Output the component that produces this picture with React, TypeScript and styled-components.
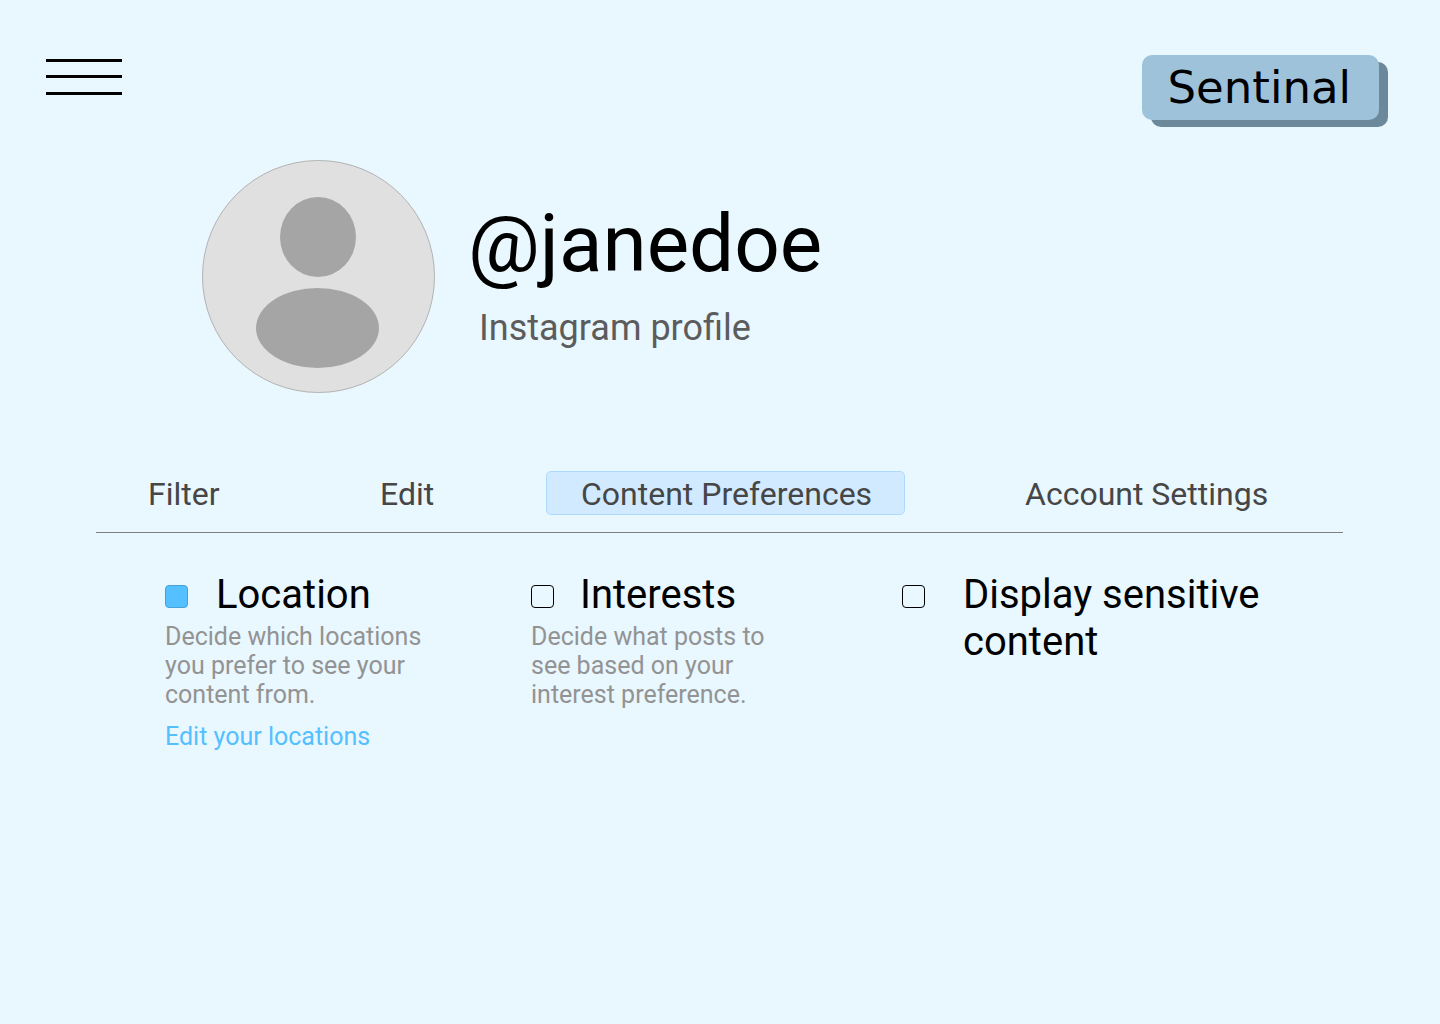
import React, { useState } from "react";
import styled, { createGlobalStyle } from "styled-components";

const GlobalStyle = createGlobalStyle`
  *, *::before, *::after { box-sizing: border-box; }
  body {
    margin: 0;
    background: #e9f7ff;
    color: #000;
    font-family: Roboto, "Liberation Sans", sans-serif;
  }
`;

const Page = styled.div`
  min-height: 100vh;
`;

const Header = styled.header`
  display: flex;
  justify-content: space-between;
  align-items: flex-start;
  padding: 55px 61px 0 46px;
`;

const MenuButton = styled.button`
  display: block;
  padding: 4px 0;
  border: 0;
  background: none;
  cursor: pointer;

  svg { display: block; }
`;

const Brand = styled.a`
  padding: 0 28px 0 25px;
  border-radius: 10px;
  background: #9dc2d9;
  box-shadow: 9px 7px 0 #6b899a;
  color: #000;
  font: 45px/65px "DejaVu Sans", Verdana, sans-serif;
  text-decoration: none;
`;

const Profile = styled.section`
  display: flex;
  gap: 33px;
  padding: 40px 96px 0 202px;
`;

const Avatar = styled.svg`
  display: block;
  flex: none;
  width: 233px;
  height: 233px;
`;

const Identity = styled.div`
  display: flex;
  flex-direction: column;
  gap: 16px;
  padding-top: 37px;
`;

const Handle = styled.h1`
  margin: 0;
  font-size: 80px;
  font-weight: 400;
  line-height: 94px;
`;

const Source = styled.p`
  margin: 0;
  padding-left: 11px;
  color: #5c5c5c;
  font-size: 36px;
  line-height: 42px;
`;

const Content = styled.main`
  padding: 78px 97px 40px 96px;
`;

const Tabs = styled.nav`
  display: grid;
  grid-template-columns: 232fr 167fr 478fr 319fr;
  justify-items: start;
  padding: 0 0 17px 51px;
  border-bottom: 1px solid #808080;
`;

const Tab = styled.a<{ $active?: boolean }>`
  padding: ${(p) => (p.$active ? "2px 32px 0 34px" : "2px 0 0")};
  border: 1px solid ${(p) => (p.$active ? "#add9ff" : "transparent")};
  border-radius: 5px;
  background: ${(p) => (p.$active ? "#d2eaff" : "none")};
  color: #464646;
  font-size: 32px;
  line-height: 40px;
  text-decoration: none;
  white-space: nowrap;
`;

const Settings = styled.div`
  display: grid;
  grid-template-columns: 366fr 371fr 441fr;
  padding: 38px 0 0 69px;
`;

const SettingTitle = styled.label<{ $gap: number }>`
  display: flex;
  align-items: flex-start;
  gap: ${(p) => p.$gap}px;
  font-size: 40px;
  line-height: 47px;
  cursor: pointer;
`;

const CheckBox = styled.input`
  appearance: none;
  flex: none;
  width: 23px;
  height: 23px;
  margin: 14px 0 0;
  border: 1px solid #000;
  border-radius: 4px;
  cursor: pointer;

  &:checked {
    border-color: #46a2d8;
    background: #54c0ff;
  }
`;

const Description = styled.p`
  max-width: 270px;
  margin: 4px 0 13px;
  color: #939393;
  font-size: 25px;
  line-height: 29px;
`;

const EditLink = styled.a`
  color: #54c0ff;
  font-size: 25px;
  line-height: 29px;
  text-decoration: none;
`;

const tabs = ["Filter", "Edit", "Content Preferences", "Account Settings"];

type Setting = {
  id: string;
  title: string;
  gap: number;
  description?: string;
  link?: string;
};

const settings: Setting[] = [
  {
    id: "location",
    title: "Location",
    gap: 28,
    description: "Decide which locations you prefer to see your content from.",
    link: "Edit your locations",
  },
  {
    id: "interests",
    title: "Interests",
    gap: 26,
    description: "Decide what posts to see based on your interest preference.",
  },
  { id: "sensitive", title: "Display sensitive content", gap: 38 },
];

export default function App() {
  const [enabled, setEnabled] = useState<Record<string, boolean>>({ location: true });

  return (
    <Page>
      <GlobalStyle />
      <Header>
        <MenuButton type="button" aria-label="Menu">
          <svg width="76" height="36" viewBox="0 0 76 36" aria-hidden="true">
            <path d="M0 1.5H76M0 17.5H76M0 34.5H76" stroke="#000" strokeWidth="3" />
          </svg>
        </MenuButton>
        <Brand href="#home">Sentinal</Brand>
      </Header>

      <Profile>
        <Avatar viewBox="0 0 233 233" aria-hidden="true">
          <circle cx="116.5" cy="116.5" r="116" fill="#e0e0e0" stroke="#b3b3b3" />
          <ellipse cx="116" cy="77" rx="38" ry="40" fill="#a5a5a5" />
          <ellipse cx="115.5" cy="168" rx="61.5" ry="40" fill="#a5a5a5" />
        </Avatar>
        <Identity>
          <Handle>@janedoe</Handle>
          <Source>Instagram profile</Source>
        </Identity>
      </Profile>

      <Content>
        <Tabs>
          {tabs.map((name) => {
            const active = name === "Content Preferences";
            return (
              <Tab key={name} href="#" $active={active} aria-current={active ? "page" : undefined}>
                {name}
              </Tab>
            );
          })}
        </Tabs>
        <Settings>
          {settings.map((s) => (
            <section key={s.id}>
              <SettingTitle htmlFor={s.id} $gap={s.gap}>
                <CheckBox
                  id={s.id}
                  type="checkbox"
                  checked={!!enabled[s.id]}
                  onChange={(e) => setEnabled({ ...enabled, [s.id]: e.target.checked })}
                />
                {s.title}
              </SettingTitle>
              {s.description && <Description>{s.description}</Description>}
              {s.link && <EditLink href="#locations">{s.link}</EditLink>}
            </section>
          ))}
        </Settings>
      </Content>
    </Page>
  );
}
